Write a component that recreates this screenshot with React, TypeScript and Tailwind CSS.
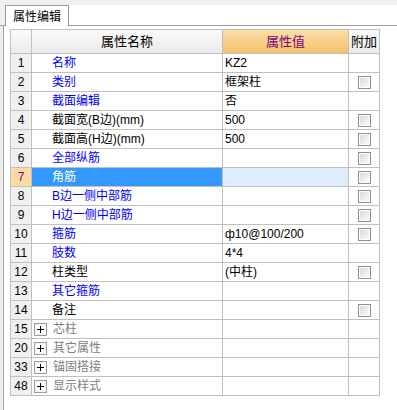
import React from 'react';

type Row = {
  no: number;
  name: string;
  value?: string;
  blue?: boolean;
  check?: boolean;
  group?: boolean;
  selected?: boolean;
};

const rows: Row[] = [
  { no: 1, name: '名称', value: 'KZ2', blue: true },
  { no: 2, name: '类别', value: '框架柱', blue: true, check: true },
  { no: 3, name: '截面编辑', value: '否', blue: true },
  { no: 4, name: '截面宽(B边)(mm)', value: '500', check: true },
  { no: 5, name: '截面高(H边)(mm)', value: '500', check: true },
  { no: 6, name: '全部纵筋', blue: true, check: true },
  { no: 7, name: '角筋', blue: true, check: true, selected: true },
  { no: 8, name: 'B边一侧中部筋', blue: true, check: true },
  { no: 9, name: 'H边一侧中部筋', blue: true, check: true },
  { no: 10, name: '箍筋', value: 'ф10@100/200', blue: true, check: true },
  { no: 11, name: '肢数', value: '4*4', blue: true },
  { no: 12, name: '柱类型', value: '(中柱)', check: true },
  { no: 13, name: '其它箍筋', blue: true },
  { no: 14, name: '备注', check: true },
  { no: 15, name: '芯柱', group: true },
  { no: 20, name: '其它属性', group: true },
  { no: 33, name: '锚固搭接', group: true },
  { no: 48, name: '显示样式', group: true },
];

function CheckBox() {
  return (
    <div className="w-[13px] h-[13px] border border-[#8e8f8f] bg-white p-px">
      <div className="w-full h-full bg-gradient-to-br from-[#d6d9de] to-[#fbfbfb]" />
    </div>
  );
}

function PlusBox() {
  return (
    <div className="relative w-[13px] h-[13px] border border-[#9c9c9c] bg-[#f4f4f4] p-px">
      <div className="w-full h-full bg-white flex items-center justify-center">
        <div className="relative w-[7px] h-[7px]">
          <div className="absolute left-0 top-[3px] w-[7px] h-px bg-black" />
          <div className="absolute left-[3px] top-0 w-px h-[7px] bg-black" />
        </div>
      </div>
    </div>
  );
}

export default function App() {
  return (
    <div
      className="w-[397px] h-[410px] bg-white overflow-hidden text-[12px] leading-none text-black"
      style={{ fontFamily: '"Liberation Sans", "Noto Sans CJK SC", sans-serif' }}
    >
      {/* top strip */}
      <div className="h-[5px] bg-[#f0f0f0]" />
      {/* tab row */}
      <div className="flex h-[21px]">
        <div className="w-[5px] bg-[#f0f0f0] border-b border-[#a0a0a0]" />
        <div className="w-[64px] border-t border-l border-r border-[#919b9c] bg-white flex items-center pl-[7px] pt-px text-[12px]">
          属性编辑
        </div>
        <div className="flex-1 border-b border-[#a0a0a0]" />
      </div>
      {/* panel */}
      <div className="flex h-[384px]">
        <div className="w-[3px] bg-[#ececec]" />
        <div className="flex-1 border-l border-[#a0a0a0] pl-[6px] pt-[3px]">
          <div className="grid grid-cols-[20px_190px_125px_30px] gap-px bg-[#c0c0c0] p-px w-[370px]">
            {/* header */}
            <div className="h-[23px] bg-gradient-to-b from-[#fafafa] to-[#ebebeb]" />
            <div className="h-[23px] bg-gradient-to-b from-[#fafafa] to-[#ebebeb] flex items-center justify-center text-[13px]">
              属性名称
            </div>
            <div className="h-[23px] bg-gradient-to-b from-[#fbdea8] to-[#f2c266] flex items-center justify-center text-[13px] text-[#800080]">
              属性值
            </div>
            <div className="h-[23px] bg-gradient-to-b from-[#fafafa] to-[#ebebeb] flex items-center justify-center text-[13px]">
              附加
            </div>

            {rows.map((r) => (
              <React.Fragment key={r.no}>
                <div
                  className={`h-[18px] flex items-center justify-center ${
                    r.selected ? 'bg-[#fddba0] text-[#800080]' : 'bg-[#f0f0f0]'
                  }`}
                >
                  {r.no}
                </div>
                <div
                  className={`h-[18px] flex items-center ${
                    r.selected ? 'bg-[#3399ff] text-white' : 'bg-white'
                  } ${r.group ? 'pl-[2px] gap-[6px] text-[#808080]' : 'pl-[20px]'} ${
                    r.blue && !r.selected ? 'text-[#0000ff]' : ''
                  }`}
                >
                  {r.group && <PlusBox />}
                  <span>{r.name}</span>
                </div>
                <div
                  className={`h-[18px] flex items-center pl-[2px] ${
                    r.selected ? 'bg-[#ddedfd]' : 'bg-white'
                  }`}
                >
                  {r.value}
                </div>
                <div className="h-[18px] bg-white flex items-center justify-center">
                  {r.check && <CheckBox />}
                </div>
              </React.Fragment>
            ))}
          </div>
        </div>
      </div>
    </div>
  );
}
